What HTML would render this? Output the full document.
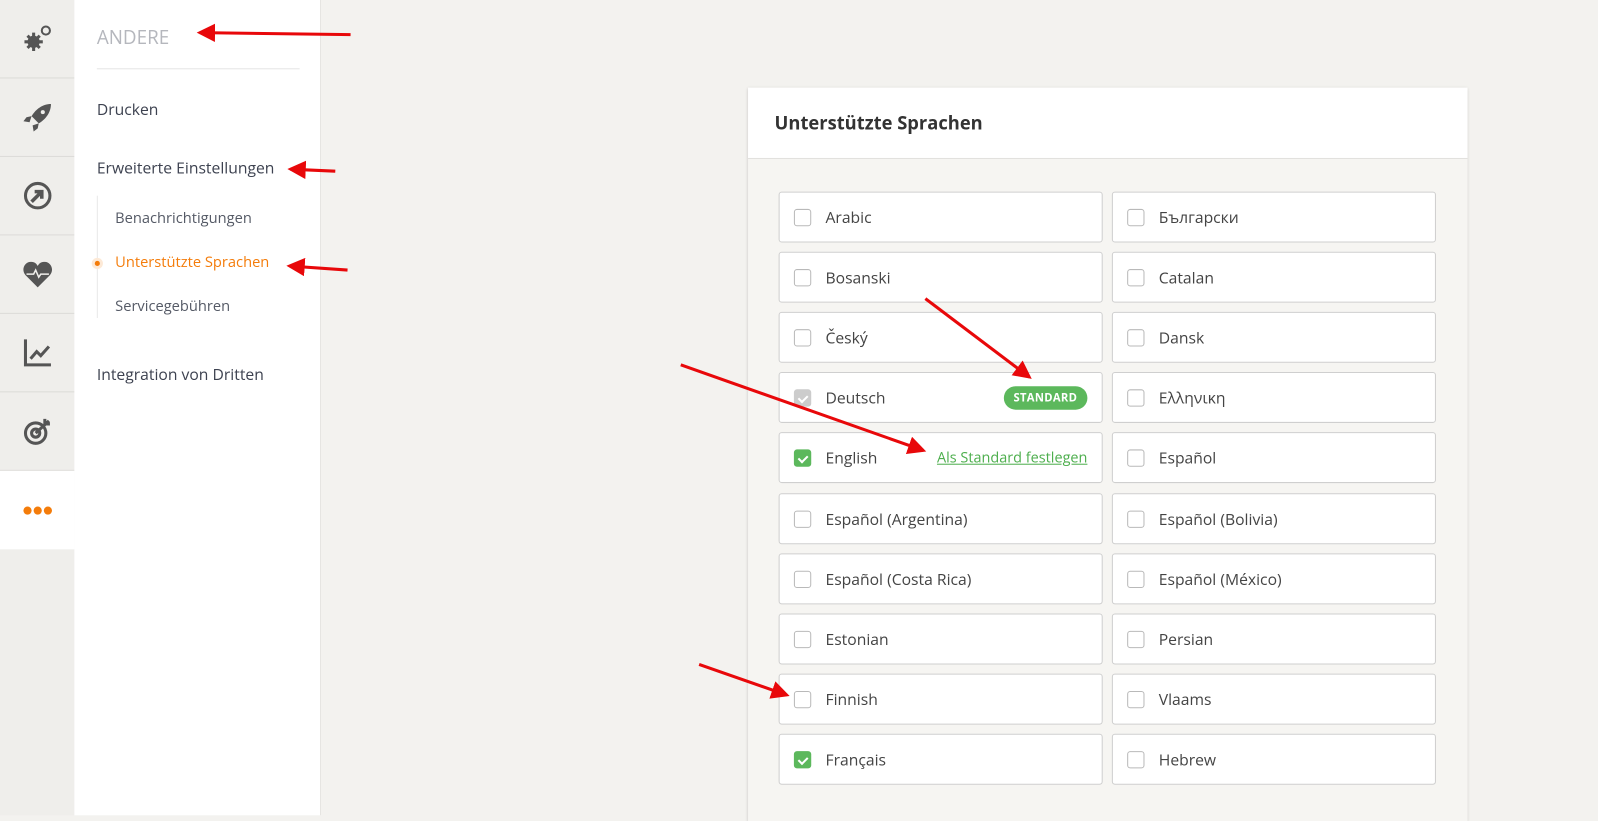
<!DOCTYPE html>
<html><head><meta charset="utf-8"><style>
*{box-sizing:border-box;margin:0;padding:0}
html,body{width:1598px;height:780px;overflow:hidden;background:#f3f2ef}
#w{position:absolute;left:0;top:0;width:1568px;height:766px;transform:scale(1.01913);transform-origin:0 0;font-family:"Open Sans","Liberation Sans",sans-serif}
.icons{position:absolute;left:0;top:0;width:73px;height:800px;background:#efeeeb}
.ic{position:absolute;left:0;width:73px;height:77px;border-bottom:1px solid #dcdbd8;display:flex;align-items:center;justify-content:center}
.menu{position:absolute;left:73px;top:0;width:242px;height:800px;background:#fff;border-right:1px solid #e6e5e2}
.t{position:absolute;font-size:15.4px;color:#3d4250}
.card{position:absolute;left:734px;top:86px;width:706px;height:720px;background:#f6f5f2;box-shadow:0 1px 3px rgba(0,0,0,.2)}
.hd{height:70px;background:#fff;border-bottom:1px solid #e2e1de;padding:23px 26px;font-weight:bold;font-size:18px;color:#333}
.row{position:absolute;width:318px;height:50px;background:#fff;border:1px solid #cfcfcf;border-radius:3px;font-size:15.4px;color:#444}
.cb{position:absolute;left:14px;top:16px;width:17px;height:17px;border:1px solid #b9b9b9;border-radius:3px;background:#fff}
.cb.on{background:#5cb85c;border-color:#5cb85c}
.cb.dis{background:#ccc;border-color:#ccc}
.cb.on:after,.cb.dis:after{content:"";position:absolute;left:5px;top:3px;width:4px;height:7px;border:solid #fff;border-width:0 2px 2px 0;transform:rotate(45deg)}
.lb{position:absolute;left:45px;top:14px}
.badge{position:absolute;right:14px;top:13px;background:#5cb85c;color:#fff;font-size:11px;font-weight:bold;border-radius:12px;padding:4px 10px;letter-spacing:.3px}
.lnk{position:absolute;right:14px;top:15px;color:#4cae4c;text-decoration:underline;font-size:14.2px}
</style></head><body><div id="w">
<div class="icons">
<div class="ic" style="top:0"><svg width="30" height="30" viewBox="0 0 30 30" fill="#555"><circle cx="11" cy="18" r="6"/><circle cx="11" cy="18" r="2" fill="#efeeeb"/><g stroke="#555" stroke-width="3"><line x1="11" y1="9" x2="11" y2="27"/><line x1="2" y1="18" x2="20" y2="18"/><line x1="5" y1="12" x2="17" y2="24"/><line x1="17" y1="12" x2="5" y2="24"/></g><circle cx="23" cy="7" r="4" fill="none" stroke="#555" stroke-width="2"/></svg></div>
<div class="ic" style="top:77px"><svg width="30" height="30" viewBox="0 0 30 30" fill="#555"><path d="M28 2C20 2 13 7 9 14l7 7c7-4 12-11 12-19z"/><path d="M9 14l-5 1-3 4 6 1zM16 21l-1 5-4 3-1-6z"/><circle cx="20" cy="10" r="2" fill="#efeeeb"/></svg></div>
<div class="ic" style="top:154px"><svg width="30" height="30" viewBox="0 0 30 30"><circle cx="15" cy="15" r="12" fill="none" stroke="#555" stroke-width="3"/><path d="M9 21l9-9M12 11h7v7" stroke="#555" stroke-width="3.5" fill="none"/></svg></div>
<div class="ic" style="top:231px"><svg width="30" height="28" viewBox="0 0 30 28"><path d="M15 27L3 15C-2 9 3 1 9 2c3 0 5 2 6 4 1-2 3-4 6-4 6-1 11 7 6 13z" fill="#555"/><path d="M4 14h7l2-4 3 7 2-3h8" stroke="#efeeeb" stroke-width="1.5" fill="none"/></svg></div>
<div class="ic" style="top:308px"><svg width="30" height="30" viewBox="0 0 30 30" fill="none" stroke="#555" stroke-width="3"><path d="M3 2v25h25"/><path d="M8 21l6-7 4 4 8-9"/></svg></div>
<div class="ic" style="top:385px"><svg width="30" height="30" viewBox="0 0 30 30" fill="none" stroke="#555" stroke-width="3"><circle cx="13" cy="17" r="10"/><circle cx="13" cy="17" r="4"/><path d="M13 17L26 5M22 3v5h5"/></svg></div>
<div class="ic" style="top:462px;background:#fff;height:77px;border:none"><svg width="30" height="10"><circle cx="5" cy="5" r="4" fill="#f47c0a"/><circle cx="15" cy="5" r="4" fill="#f47c0a"/><circle cx="25" cy="5" r="4" fill="#f47c0a"/></svg></div>
</div>
<div class="menu">
<div class="t" style="left:22px;top:24px;font-size:18.5px;color:#b5b7bd">ANDERE</div>
<div style="position:absolute;left:22px;top:67px;width:199px;height:1px;background:#e4e4e4"></div>
<div class="t" style="left:22px;top:97px">Drucken</div>
<div class="t" style="left:22px;top:154px">Erweiterte Einstellungen</div>
<div style="position:absolute;left:22px;top:192px;width:1px;height:120px;background:#e8e8e8"></div>
<div class="t" style="left:40px;top:205px;font-size:14.4px;color:#555a66">Benachrichtigungen</div>
<div style="position:absolute;left:17px;top:253px;width:11px;height:11px;border-radius:50%;background:#fde9d6"></div>
<div style="position:absolute;left:20px;top:256px;width:5px;height:5px;border-radius:50%;background:#f47c0a"></div>
<div class="t" style="left:40px;top:248px;font-size:14.4px;color:#f47c0a">Unterstützte Sprachen</div>
<div class="t" style="left:40px;top:291px;font-size:14.4px;color:#555a66">Servicegebühren</div>
<div class="t" style="left:22px;top:357px">Integration von Dritten</div>
</div>
<div class="card"><div class="hd">Unterstützte Sprachen</div></div>
<div class="row" style="left:764px;top:188px"><span class="cb"></span><span class="lb">Arabic</span></div>
<div class="row" style="left:1091px;top:188px"><span class="cb"></span><span class="lb">Български</span></div>
<div class="row" style="left:764px;top:247px"><span class="cb"></span><span class="lb">Bosanski</span></div>
<div class="row" style="left:1091px;top:247px"><span class="cb"></span><span class="lb">Catalan</span></div>
<div class="row" style="left:764px;top:306px"><span class="cb"></span><span class="lb">Český</span></div>
<div class="row" style="left:1091px;top:306px"><span class="cb"></span><span class="lb">Dansk</span></div>
<div class="row" style="left:764px;top:365px"><span class="cb dis"></span><span class="lb">Deutsch</span><span class="badge">STANDARD</span></div>
<div class="row" style="left:1091px;top:365px"><span class="cb"></span><span class="lb">Ελληνικη</span></div>
<div class="row" style="left:764px;top:424px"><span class="cb on"></span><span class="lb">English</span><span class="lnk">Als Standard festlegen</span></div>
<div class="row" style="left:1091px;top:424px"><span class="cb"></span><span class="lb">Español</span></div>
<div class="row" style="left:764px;top:484px"><span class="cb"></span><span class="lb">Español (Argentina)</span></div>
<div class="row" style="left:1091px;top:484px"><span class="cb"></span><span class="lb">Español (Bolivia)</span></div>
<div class="row" style="left:764px;top:543px"><span class="cb"></span><span class="lb">Español (Costa Rica)</span></div>
<div class="row" style="left:1091px;top:543px"><span class="cb"></span><span class="lb">Español (México)</span></div>
<div class="row" style="left:764px;top:602px"><span class="cb"></span><span class="lb">Estonian</span></div>
<div class="row" style="left:1091px;top:602px"><span class="cb"></span><span class="lb">Persian</span></div>
<div class="row" style="left:764px;top:661px"><span class="cb"></span><span class="lb">Finnish</span></div>
<div class="row" style="left:1091px;top:661px"><span class="cb"></span><span class="lb">Vlaams</span></div>
<div class="row" style="left:764px;top:720px"><span class="cb on"></span><span class="lb">Français</span></div>
<div class="row" style="left:1091px;top:720px"><span class="cb"></span><span class="lb">Hebrew</span></div>
<svg style="position:absolute;left:0;top:0" width="1568" height="766">
<defs><marker id="a" markerWidth="6" markerHeight="6" refX="5" refY="3" orient="auto"><path d="M0 0L6 3 0 6z" fill="#e8080a"/></marker></defs>
<g stroke="#e8080a" stroke-width="3" marker-end="url(#a)">
<line x1="344" y1="34" x2="196" y2="32"/>
<line x1="329" y1="168" x2="285" y2="166"/>
<line x1="341" y1="265" x2="284" y2="261"/>
<line x1="908" y1="293" x2="1010" y2="370"/>
<line x1="668" y1="358" x2="906" y2="442"/>
<line x1="686" y1="652" x2="772" y2="682"/>
</g></svg>
</div></body></html>
